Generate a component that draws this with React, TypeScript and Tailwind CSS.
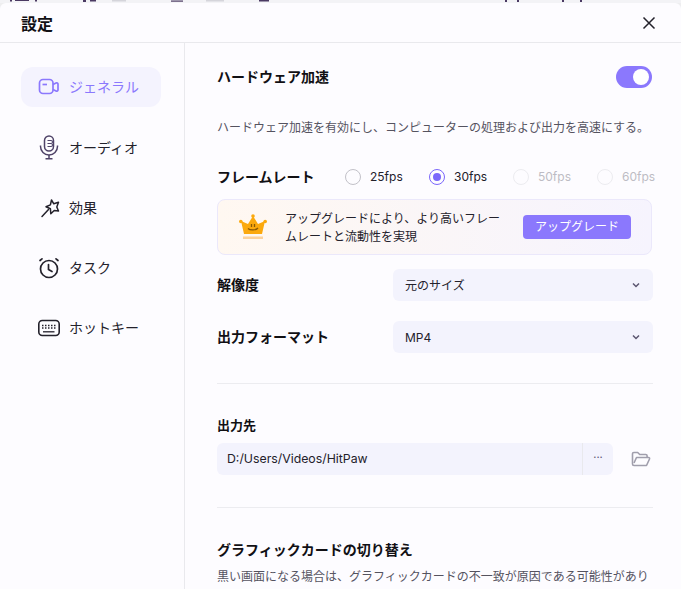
import React from "react";

function TopFragments() {
  return (
    <svg className="block" width="681" height="3" viewBox="0 0 681 3">
      <rect width="681" height="3" fill="#f3f3f6" />
      <g fill="#4b3a63">
        <rect x="10" y="0" width="2" height="1.500" />
        <rect x="15" y="0" width="14" height="1" />
        <rect x="35" y="0" width="2" height="1.500" />
        <rect x="83" y="0" width="3" height="2" />
        <rect x="90" y="0" width="6" height="1.500" />
        <rect x="171" y="0.500" width="12" height="1.200" />
        <rect x="259" y="0" width="10" height="1.500" />
        <rect x="505" y="0" width="2" height="2" />
        <rect x="517" y="0" width="2" height="2" />
        <rect x="562" y="0" width="2" height="2" />
        <rect x="580" y="0" width="2" height="2" />
      </g>
      <g fill="#d5d5db">
        <rect x="112" y="0" width="14" height="1.500" />
        <rect x="206" y="0" width="18" height="1.500" />
      </g>
    </svg>
  );
}

function NavVideo() {
  return (
    <svg width="24" height="20" viewBox="0 0 24 20" fill="none" stroke="#8b78fd" strokeWidth="1.700">
      <rect x="1.500" y="2.500" width="13.500" height="14" rx="3.500" />
      <path d="M15 7.500l3-1.500c.9-.4 2 .2 2 1.100v5.800c0 .9-1.100 1.500-2 1.100l-3-1.500" />
      <path d="M4.500 7.500h4.500" />
    </svg>
  );
}
function NavMic() {
  return (
    <svg width="24" height="26" viewBox="0 0 24 26" fill="none" stroke="#4f4368" strokeWidth="1.500">
      <rect x="6.500" y="1" width="9" height="15" rx="4.500" />
      <path d="M9.500 5.500h3.500a1.500 1.500 0 010 3H9.500M9.500 8.500h3.500a1.500 1.500 0 010 3H9.500" strokeWidth="1.100" />
      <path d="M2.500 10.500v1a8.500 8.500 0 0017 0v-1" />
      <path d="M11 20v3.500M7.500 23.800h7" />
    </svg>
  );
}
function NavWand() {
  return (
    <svg width="24" height="24" viewBox="0 0 24 24" fill="none" stroke="#23212b" strokeWidth="1.500" strokeLinejoin="round" strokeLinecap="round">
      <path d="M13.500 4l2.300 3.800 4.700-1.500-1.700 4.700 1.700 4-4.300-.5-3.400 3.200-.4-4.900-4.400-2 4.400-1.900z" />
      <path d="M10.500 13.500L4 20.500" />
    </svg>
  );
}
function NavClock() {
  return (
    <svg width="24" height="24" viewBox="0 0 24 24" fill="none" stroke="#23212b" strokeWidth="1.700" strokeLinecap="round">
      <circle cx="11" cy="13" r="8.500" />
      <path d="M10.500 8.500v5l3.500 2" />
      <path d="M2 4.500L4 2.800M20 4.500L18 2.800" />
    </svg>
  );
}
function NavKeyboard() {
  return (
    <svg width="24" height="18" viewBox="0 0 24 18" fill="none" stroke="#23212b" strokeWidth="1.600">
      <rect x="0.800" y="1.500" width="20.400" height="15" rx="3.500" />
      <path d="M4 6.500h1.500M7 6.500h1.500M10 6.500h1.500M13 6.500h1.500M16 6.500h1.500" strokeWidth="1.300" />
      <path d="M4 9h1.500M7 9h1.500M10 9h1.500M13 9h1.500M16 9h1.500" strokeWidth="1.300" />
      <path d="M5 12.800h11.500" strokeWidth="1.300" />
    </svg>
  );
}
function Crown() {
  return (
    <svg width="28" height="26" viewBox="0 0 28 26">
      <path d="M14 2l5 8 7-3-3 13H5L2 7l7 3z" fill="#fba90e" />
      <circle cx="14" cy="2" r="1.800" fill="#fba90e" />
      <circle cx="1.800" cy="7.500" r="1.800" fill="#fba90e" />
      <circle cx="26.200" cy="7.500" r="1.800" fill="#fba90e" />
      <path d="M9 14.500c2 2 8 2 10-.5" stroke="#8a5a07" strokeWidth="1.300" fill="none" />
      <path d="M12.500 10v3M15.500 10v3" stroke="#8a5a07" strokeWidth="1.300" />
      <rect x="4" y="22.500" width="20" height="2.500" fill="#fcd29b" />
    </svg>
  );
}
function Chevron() {
  return (
    <svg width="8" height="6" viewBox="0 0 8 6" fill="none" stroke="#5b5570" strokeWidth="1.500">
      <path d="M1 1.500l3 3 3-3" />
    </svg>
  );
}
function Folder() {
  return (
    <svg width="20" height="16" viewBox="0 0 20 16" fill="none" stroke="#a09eac" strokeWidth="1.600" strokeLinejoin="round">
      <path d="M3 14.500c-1 0-1.500-.6-1.500-1.500V2.800c0-.8.5-1.300 1.300-1.300h3.900l2 2h6c.9 0 1.400.5 1.400 1.300V6.500" />
      <path d="M3 14.500h12.500l3-6.500c.3-.8-.1-1.500-1-1.500H5.500L3 12" />
    </svg>
  );
}

function NavItem({ icon, label, active }: { icon: React.ReactNode; label: string; active?: boolean }) {
  return (
    <div className={`flex h-10 w-[140px] items-center gap-[7px] rounded-xl pl-[17px] text-sm ${active ? "mb-px bg-[#f4f3fe] text-[#8b78fd]" : "text-[#23212b]"}`}>
      <span className="flex w-6 justify-center">{icon}</span>
      <span>{label}</span>
    </div>
  );
}

function Radio({ label, checked, disabled }: { label: string; checked?: boolean; disabled?: boolean }) {
  return (
    <div className={`flex w-[84px] shrink-0 items-center gap-[9px] text-xs ${disabled ? "text-[#bdbcc4]" : "text-[#23212b]"}`}>
      {checked ? (
        <span className="flex h-4 w-4 items-center justify-center rounded-full border-[1.500px] border-[#7a66fb]">
          <span className="h-2 w-2 rounded-full bg-[#7a66fb]" />
        </span>
      ) : (
        <span className={`h-4 w-4 rounded-full border-[1.500px] ${disabled ? "border-[#ececf0]" : "border-[#c2c1c8]"}`} />
      )}
      <span>{label}</span>
    </div>
  );
}

function Select({ value }: { value: string }) {
  return (
    <div className="flex h-8 w-[260px] items-center justify-between rounded-md bg-[#f3f3fd] pl-3 pr-[13px] text-xs text-[#23212b]">
      <span className="pt-px">{value}</span>
      <Chevron />
    </div>
  );
}

export default function App() {
  return (
    <div
      className="h-[589px] w-[681px] overflow-hidden bg-[#eeeef0]"
      style={{ fontFamily: 'Inter, "Noto Sans CJK JP", sans-serif' }}
    >
      <TopFragments />
      <div className="flex h-[586px] flex-col rounded-t-md bg-[#fdfcff]">
        <header className="flex h-[40px] shrink-0 items-center justify-between border-b border-[#e9e9ed] pl-[21px] pr-[25px]">
          <h1 className="pt-[2px] text-base font-bold text-[#111014]">設定</h1>
          <svg width="14" height="14" viewBox="0 0 14 14" stroke="#23212b" strokeWidth="1.500" fill="none">
            <path d="M1.500 1.500l11 11M12.500 1.500l-11 11" />
          </svg>
        </header>
        <div className="flex min-h-0 flex-1">
          <nav className="flex w-[185px] shrink-0 flex-col gap-5 border-r border-[#e9e9ed] pl-[21px] pt-6">
            <NavItem active icon={<NavVideo />} label="ジェネラル" />
            <NavItem icon={<NavMic />} label="オーディオ" />
            <NavItem icon={<NavWand />} label="効果" />
            <NavItem icon={<NavClock />} label="タスク" />
            <NavItem icon={<NavKeyboard />} label="ホットキー" />
          </nav>
          <main className="min-w-0 flex-1 overflow-hidden pl-8 pr-7">
            <div className="flex h-[68px] items-center justify-between">
              <span className="text-sm font-bold text-[#111014]">ハードウェア加速</span>
              <span className="mr-px flex h-[22px] w-9 items-center justify-end rounded-full bg-[#8b78fd] pr-[3px]">
                <span className="h-4 w-4 rounded-full bg-white" />
              </span>
            </div>
            <p className="mt-[5px] text-xs leading-[24px] text-[#55535f]">
              ハードウェア加速を有効にし、コンピューターの処理および出力を高速にする。
            </p>
            <div className="mt-[25px] flex h-6 items-center">
              <span className="w-[128px] shrink-0 text-sm font-bold text-[#111014]">フレームレート</span>
              <Radio label="25fps" />
              <Radio checked label="30fps" />
              <Radio disabled label="50fps" />
              <Radio disabled label="60fps" />
            </div>
            <div className="mt-[10px] flex h-14 w-[435px] items-center rounded-lg border border-[#ebe8fb] bg-gradient-to-r from-[#fff8f1] to-[#f6f4fe] pl-[21px] pr-5">
              <Crown />
              <p className="ml-[18px] mt-[2px] w-[220px] text-xs leading-[18px] text-[#23212b]">
                アップグレードにより、より高いフレームレートと流動性を実現
              </p>
              <span className="ml-auto flex h-6 w-[108px] items-center justify-center rounded bg-[#8b78fd] text-xs text-white">
                アップグレード
              </span>
            </div>
            <div className="mt-[14px] flex items-center justify-between">
              <span className="text-sm font-bold text-[#111014]">解像度</span>
              <Select value="元のサイズ" />
            </div>
            <div className="mt-5 flex items-center justify-between">
              <span className="text-sm font-bold text-[#111014]">出力フォーマット</span>
              <Select value="MP4" />
            </div>
            <hr className="mt-[30px] border-[#ececf0]" />
            <div className="mt-[31px] text-[13px] leading-5 font-bold text-[#111014]">出力先</div>
            <div className="mt-2 flex items-center justify-between">
              <div className="flex h-8 w-[396px] items-center rounded-md bg-[#f3f3fd] text-xs text-[#23212b]">
                <span className="flex-1 pl-[10px] pt-px text-[12.300px]">D:/Users/Videos/HitPaw</span>
                <span className="flex h-full w-[31px] items-center justify-center border-l border-[#e9e9ed] pb-1 text-[11px] text-[#5b5570]">
                  ···
                </span>
              </div>
              <span className="mr-[2px]">
                <Folder />
              </span>
            </div>
            <hr className="mt-8 border-[#ececf0]" />
            <div className="mt-8 text-sm leading-5 font-bold text-[#111014]">グラフィックカードの切り替え</div>
            <p className="mt-[6px] text-xs leading-[22px] text-[#55535f]">
              黒い画面になる場合は、グラフィックカードの不一致が原因である可能性があり
              <br />
              ます。カードを切り替えて、もう一度お試しください。
            </p>
          </main>
        </div>
      </div>
    </div>
  );
}
